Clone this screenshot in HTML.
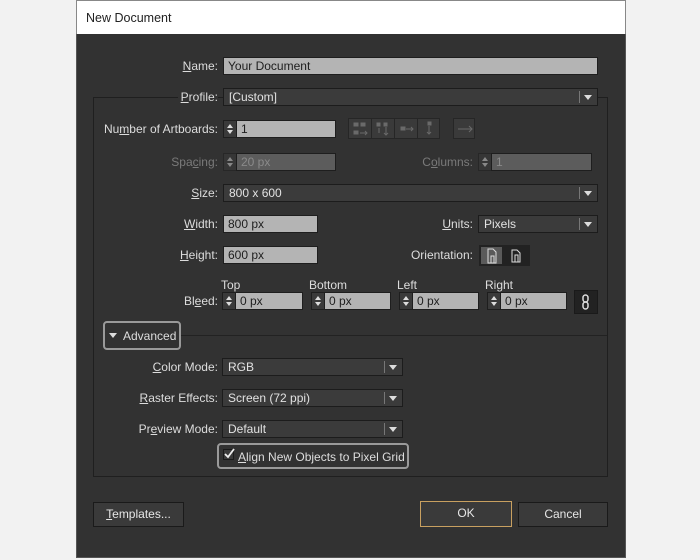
<!DOCTYPE html>
<html><head><style>
*{margin:0;padding:0;box-sizing:border-box}
body{width:700px;height:560px;background:#f2f2f2;position:relative;overflow:hidden;font-family:"Liberation Sans",sans-serif;font-size:12px}
.dlg{position:absolute;left:76px;top:0;width:550px;height:558px;background:#323232;border:1px solid #555}
.title{position:absolute;left:76px;top:0;width:550px;height:34px;background:#fff;border:1px solid #888;border-bottom:none}
.title span{position:absolute;left:9px;top:10px;color:#222;font-size:12.5px}
.a{position:absolute}
.lbl{position:absolute;color:#ddd;text-align:right;white-space:nowrap}
.dis{color:#7a7a7a}
.in{position:absolute;background:#b4b4b4;border:1px solid #1e1e1e;color:#1e1e1e;padding:1px 4px;height:18px;line-height:15px}
.dd{position:absolute;background:#3b3b3b;border:1px solid #1c1c1c;color:#e2e2e2;padding:1px 5px;height:18px;line-height:15px}
.dd:after{content:"";position:absolute;right:5px;top:6px;border-left:4px solid transparent;border-right:4px solid transparent;border-top:5px solid #ddd}
.dd:before{content:"";position:absolute;right:17px;top:2px;width:1px;height:12px;background:#777}
.sp{position:absolute;background:#3a3a3a;border:1px solid #1e1e1e;width:14px;height:18px}
.sp:before{content:"";position:absolute;left:3px;top:3px;border-left:3px solid transparent;border-right:3px solid transparent;border-bottom:4px solid #ddd}
.sp:after{content:"";position:absolute;left:3px;top:9px;border-left:3px solid transparent;border-right:3px solid transparent;border-top:4px solid #ddd}
.btn{position:absolute;background:#3a3a3a;border:1px solid #1a1a1a;color:#e6e6e6;text-align:center;line-height:23px}
.ic{position:absolute;background:#3a3a3a;border:1px solid #262626;top:118px;height:21px}
</style></head><body>
<div class="dlg"></div>
<div class="title"><span>New Document</span></div>
<!-- group box -->
<div class="a" style="left:93px;top:97px;width:515px;height:380px;border:1px solid #1f1f1f;border-top-color:#1f1f1f"></div>
<div class="a" style="left:178px;top:92px;width:40px;height:10px;background:#323232"></div>

<div class="lbl" style="right:482px;top:59px"><u>N</u>ame:</div>
<div class="in" style="left:223px;top:57px;width:375px">Your Document</div>

<div class="lbl" style="right:482px;top:90px"><u>P</u>rofile:</div>
<div class="dd" style="left:223px;top:88px;width:375px">[Custom]</div>

<div class="lbl" style="right:482px;top:122px">Nu<u>m</u>ber of Artboards:</div>
<div class="sp" style="left:223px;top:120px"></div>
<div class="in" style="left:236px;top:120px;width:100px">1</div>
<div class="ic" style="left:348px;width:24px"></div>
<div class="ic" style="left:371px;width:24px"></div>
<div class="ic" style="left:394px;width:24px"></div>
<div class="ic" style="left:417px;width:23px"></div>
<div class="ic" style="left:453px;width:22px"></div>
<svg class="a" style="left:348px;top:118px" width="130" height="22" stroke="#6a6a6a" fill="#6a6a6a"><rect x="6" y="5" width="4" height="3"/><rect x="13" y="5" width="4" height="3"/><rect x="6" y="13" width="4" height="3"/><path d="M12 15h7M17 13l2 2-2 2" fill="none"/><rect x="29" y="5" width="3" height="3"/><rect x="36" y="5" width="3" height="3"/><path d="M38 9v8M36 15l2 2 2-2M31 10v5" fill="none"/><rect x="53" y="9" width="4" height="3"/><path d="M58 11h7M63 9l2 2-2 2" fill="none"/><rect x="80" y="4" width="3" height="3"/><path d="M81 8v8M79 14l2 2 2-2" fill="none"/><path d="M110 11h14M121 8l3 3-3 3" fill="none"/></svg>

<div class="lbl dis" style="right:482px;top:155px">Spa<u>c</u>ing:</div>
<div class="sp" style="left:223px;top:153px;opacity:.5"></div>
<div class="in" style="left:236px;top:153px;width:100px;background:#5c5c5c;color:#8a8a8a">20 px</div>
<div class="lbl dis" style="right:227px;top:155px">C<u>o</u>lumns:</div>
<div class="sp" style="left:478px;top:153px;opacity:.5"></div>
<div class="in" style="left:491px;top:153px;width:101px;background:#5c5c5c;color:#8a8a8a">1</div>

<div class="lbl" style="right:482px;top:186px"><u>S</u>ize:</div>
<div class="dd" style="left:223px;top:184px;width:375px">800 x 600</div>

<div class="lbl" style="right:482px;top:217px"><u>W</u>idth:</div>
<div class="in" style="left:223px;top:215px;width:95px">800 px</div>
<div class="lbl" style="right:227px;top:217px"><u>U</u>nits:</div>
<div class="dd" style="left:478px;top:215px;width:120px">Pixels</div>

<div class="lbl" style="right:482px;top:248px"><u>H</u>eight:</div>
<div class="in" style="left:223px;top:246px;width:95px">600 px</div>
<div class="lbl" style="right:227px;top:248px">Orientation:</div>
<div class="a" style="left:479px;top:245px;width:51px;height:21px;background:#222"></div>
<div class="a" style="left:481px;top:247px;width:21px;height:17px;background:#5a5a5a"></div>
<svg class="a" style="left:481px;top:246px" width="48" height="19" stroke="#ddd" fill="none"><path d="M7 3h5l3 3v11H7z"/><path d="M10 17v-7h3v7"/><path d="M31 4h5l3 3v9H31z"/><path d="M34 16v-7h3v7"/></svg>

<div class="lbl" style="left:221px;top:278px">Top</div>
<div class="lbl" style="left:309px;top:278px">Bottom</div>
<div class="lbl" style="left:397px;top:278px">Left</div>
<div class="lbl" style="left:485px;top:278px">Right</div>
<div class="lbl" style="right:482px;top:294px">Bl<u>e</u>ed:</div>
<div class="sp" style="left:222px;top:292px"></div><div class="in" style="left:235px;top:292px;width:68px">0 px</div>
<div class="sp" style="left:311px;top:292px"></div><div class="in" style="left:324px;top:292px;width:67px">0 px</div>
<div class="sp" style="left:399px;top:292px"></div><div class="in" style="left:412px;top:292px;width:67px">0 px</div>
<div class="sp" style="left:487px;top:292px"></div><div class="in" style="left:500px;top:292px;width:67px">0 px</div>
<div class="a" style="left:574px;top:290px;width:24px;height:24px;background:#222;border:1px solid #1a1a1a"></div>
<svg class="a" style="left:574px;top:290px" width="24" height="24" stroke="#ddd" fill="none" stroke-width="1.5"><rect x="9" y="5" width="5" height="7" rx="2.5"/><rect x="9" y="12" width="5" height="7" rx="2.5"/></svg>

<div class="a" style="left:180px;top:335px;width:427px;height:1px;background:#222"></div>
<div class="a" style="left:103px;top:321px;width:78px;height:29px;border:2px solid #9a9a9a;border-radius:4px;background:#323232"></div>
<div class="a" style="left:109px;top:333px;border-left:4px solid transparent;border-right:4px solid transparent;border-top:5px solid #ddd"></div>
<div class="lbl" style="left:123px;top:329px">Advanced</div>

<div class="lbl" style="right:482px;top:360px"><u>C</u>olor Mode:</div>
<div class="dd" style="left:222px;top:358px;width:181px">RGB</div>
<div class="lbl" style="right:482px;top:391px"><u>R</u>aster Effects:</div>
<div class="dd" style="left:222px;top:389px;width:181px">Screen (72 ppi)</div>
<div class="lbl" style="right:482px;top:422px">Pr<u>e</u>view Mode:</div>
<div class="dd" style="left:222px;top:420px;width:181px">Default</div>

<div class="a" style="left:217px;top:443px;width:192px;height:26px;border:2px solid #9a9a9a;border-radius:4px"></div>
<div class="a" style="left:223px;top:449px;width:11px;height:11px;background:#3a3a3a;border:1px solid #1a1a1a"></div>
<svg class="a" style="left:222px;top:446px" width="14" height="14" stroke="#eee" stroke-width="1.8" fill="none"><path d="M3 8l3 3 6-8"/></svg>
<div class="lbl" style="left:238px;top:450px"><u>A</u>lign New Objects to Pixel Grid</div>

<div class="btn" style="left:93px;top:502px;width:91px;height:25px"><u>T</u>emplates...</div>
<div class="btn" style="left:420px;top:501px;width:92px;height:26px;border-color:#c8a060">OK</div>
<div class="btn" style="left:518px;top:502px;width:90px;height:25px">Cancel</div>
</body></html>
